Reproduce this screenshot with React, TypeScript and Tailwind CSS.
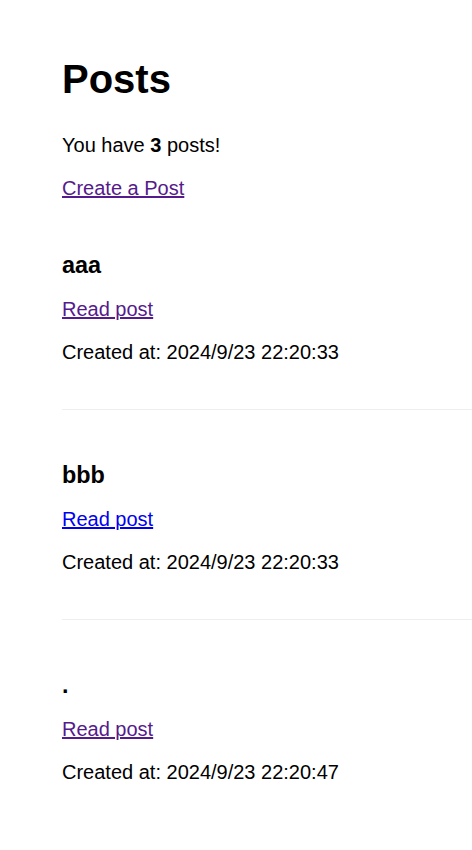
import React from "react";

const posts = [
  { title: "aaa", created: "2024/9/23 22:20:33", visited: true },
  { title: "bbb", created: "2024/9/23 22:20:33", visited: false },
  { title: ".", created: "2024/9/23 22:20:47", visited: true },
];

export default function App() {
  return (
    <div
      className="min-h-[850px] bg-white text-black pl-[62px] pt-[56px] text-[20px] leading-[23px]"
      style={{ fontFamily: '"Liberation Sans", Arial, sans-serif' }}
    >
      <div className="flex flex-col">
        <h1 className="text-[40px] leading-[46px] font-bold">Posts</h1>
        <p className="mt-[32px]">
          You have <b className="font-bold">3</b> posts!
        </p>
        <p className="mt-[20px]">
          <a href="#" className="text-[#551a8b] underline">
            Create a Post
          </a>
        </p>
      </div>
      <div className="flex flex-col">
        {posts.map((p, i) => (
          <div
            key={i}
            className={
              "flex flex-col pt-[52px] " +
              (i < posts.length - 1 ? "pb-[45px] border-b border-[#eeeeee]" : "pb-[45px]")
            }
          >
            <h3 className="text-[23.4px] leading-[27px] font-bold">{p.title}</h3>
            <p className="mt-[19px]">
              <a
                href="#"
                className={(p.visited ? "text-[#551a8b]" : "text-[#0000ee]") + " underline"}
              >
                Read post
              </a>
            </p>
            <p className="mt-[20px]">Created at: {p.created}</p>
          </div>
        ))}
      </div>
    </div>
  );
}
